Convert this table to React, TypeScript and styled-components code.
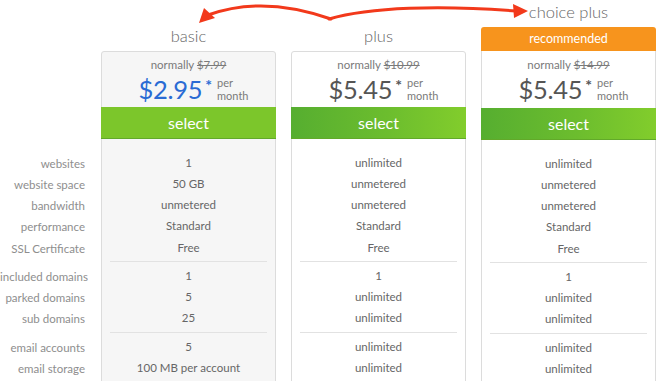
import React from "react";
import styled, { createGlobalStyle, css } from "styled-components";

const Global = createGlobalStyle`
  html, body {
    margin: 0;
    padding: 0;
    background: #ffffff;
    overflow: hidden;
  }
  body {
    font-family: Lato, "Open Sans", "Liberation Sans", sans-serif;
    color: #555;
  }
`;

type Plan = {
  name: string;
  was: string;
  price: string;
  highlight?: boolean;
  featured?: boolean;
  values: string[][];
};

const labels: string[][] = [
  ["websites", "website space", "bandwidth", "performance", "SSL Certificate"],
  ["included domains", "parked domains", "sub domains"],
  ["email accounts", "email storage"],
];

const plans: Plan[] = [
  {
    name: "basic",
    was: "$7.99",
    price: "2.95",
    highlight: true,
    values: [
      ["1", "50 GB", "unmetered", "Standard", "Free"],
      ["1", "5", "25"],
      ["5", "100 MB per account"],
    ],
  },
  {
    name: "plus",
    was: "$10.99",
    price: "5.45",
    values: [
      ["unlimited", "unmetered", "unmetered", "Standard", "Free"],
      ["1", "unlimited", "unlimited"],
      ["unlimited", "unlimited"],
    ],
  },
  {
    name: "choice plus",
    was: "$14.99",
    price: "5.45",
    featured: true,
    values: [
      ["unlimited", "unmetered", "unmetered", "Standard", "Free"],
      ["1", "unlimited", "unlimited"],
      ["unlimited", "unlimited"],
    ],
  },
];

const Page = styled.div`
  position: relative;
  width: 660px;
  height: 381px;
  overflow: hidden;
`;

const Table = styled.div`
  display: grid;
  grid-template-columns: 86px 176px 176px 176px;
  column-gap: 14px;
  & > :first-child {
    margin-right: 1px;
  }
`;

const LabelColumn = styled.div`
  padding-top: 150px;
`;

const Group = styled.div<{ $ruled?: boolean }>`
  padding: 2.5px 0 3.5px;
  margin: 0 8px;
  border-bottom: 1px solid ${(p) => (p.$ruled ? "#e2e2e2" : "transparent")};
  &:last-child {
    border-bottom-color: transparent;
  }
`;

const LabelGroup = styled(Group)`
  margin: 0;
`;

const Row = styled.div`
  height: 21.25px;
  line-height: 21.25px;
  font-size: 11.5px;
  white-space: nowrap;
  text-align: center;
`;

const LabelRow = styled(Row)`
  color: #8e8e8e;
  text-align: right;
`;

const ValueRow = styled(Row)`
  color: #666;
`;

const PlanColumn = styled.div<{ $featured?: boolean }>`
  display: flex;
  flex-direction: column;
  padding-top: ${(p) => (p.$featured ? "0" : "24px")};
  margin-left: 1px;
`;

const Heading = styled.div`
  height: 24px;
  line-height: 24px;
  margin-bottom: 3px;
  text-align: center;
  font-size: 16.5px;
  font-weight: 300;
  color: #666;
`;

const Badge = styled.div`
  height: 24px;
  line-height: 23px;
  background: #f7941d;
  border-radius: 3px 3px 0 0;
  color: #fff;
  text-align: center;
  font-size: 12.5px;
`;

const Card = styled.div<{ $shaded?: boolean; $featured?: boolean }>`
  border: 1px solid #dcdcdc;
  border-radius: 3px 3px 0 0;
  height: 400px;
  background: ${(p) => (p.$shaded ? "#f6f6f6" : "#ffffff")};
  ${(p) =>
    p.$featured &&
    css`
      border-top: none;
      border-radius: 0;
    `}
`;

const PriceBlock = styled.div<{ $featured?: boolean }>`
  height: ${(p) => (p.$featured ? "57px" : "55px")};
  display: flex;
  flex-direction: column;
  align-items: center;
  padding-top: ${(p) => (p.$featured ? "7px" : "6px")};
  box-sizing: border-box;
`;

const Normally = styled.div`
  font-size: 11.5px;
  color: #7a7a7a;
  line-height: 14px;
`;

const Struck = styled.span`
  text-decoration: line-through;
`;

const PriceLine = styled.div<{ $highlight?: boolean }>`
  display: flex;
  align-items: flex-start;
  margin-top: 1px;
  margin-left: 10px;
  color: ${(p) => (p.$highlight ? "#2a6bd4" : "#555")};
`;

const Amount = styled.span`
  font-size: 25.5px;
  font-weight: 400;
  line-height: 32px;
  letter-spacing: -0.3px;
`;

const Star = styled.span`
  font-size: 16px;
  line-height: 15px;
  font-weight: 700;
  margin: 4px 5px 0 3px;
`;

const PerMonth = styled.span`
  display: flex;
  flex-direction: column;
  font-size: 11px;
  line-height: 13px;
  color: #7a7a7a;
  margin-top: 3px;
`;

const SelectButton = styled.button<{ $flat?: boolean }>`
  display: block;
  width: calc(100% + 2px);
  margin: 0 -1px;
  height: 32px;
  border: none;
  border-bottom: 1px solid #62a92a;
  padding: 0;
  color: #fff;
  font-family: inherit;
  font-size: 16px;
  cursor: pointer;
  background: ${(p) =>
    p.$flat ? "#7cc62b" : "linear-gradient(90deg, #56ae30 0%, #6cbd2e 55%, #82cd2c 100%)"};
`;

const Body = styled.div`
  padding-top: 10px;
`;

const ArrowLayer = styled.svg`
  position: absolute;
  left: 0;
  top: 0;
  pointer-events: none;
`;

function Arrows() {
  return (
    <ArrowLayer width={660} height={30} viewBox="0 0 660 30">
      <path
        d="M331 19 C 300 8, 255 -2, 208 15"
        fill="none"
        stroke="#f2391b"
        strokeWidth={3}
        strokeLinecap="round"
      />
      <polygon points="199,23 204,8 215,18" fill="#f2391b" />
      <path
        d="M329 19 C 370 7, 440 5, 516 11"
        fill="none"
        stroke="#f2391b"
        strokeWidth={3}
        strokeLinecap="round"
      />
      <polygon points="528,11 513,4 514,18" fill="#f2391b" />
    </ArrowLayer>
  );
}

function PlanCard({ plan }: { plan: Plan }) {
  return (
    <PlanColumn $featured={plan.featured}>
      <Heading>{plan.name}</Heading>
      {plan.featured && <Badge>recommended</Badge>}
      <Card $shaded={plan.highlight} $featured={plan.featured}>
        <PriceBlock $featured={plan.featured}>
          <Normally>
            normally <Struck>{plan.was}</Struck>
          </Normally>
          <PriceLine $highlight={plan.highlight}>
            <Amount>${plan.price}</Amount>
            <Star>*</Star>
            <PerMonth>
              <span>per</span>
              <span>month</span>
            </PerMonth>
          </PriceLine>
        </PriceBlock>
        <SelectButton $flat={plan.highlight}>select</SelectButton>
        <Body>
          {plan.values.map((group, gi) => (
            <Group key={gi} $ruled>
              {group.map((v, i) => (
                <ValueRow key={i}>{v}</ValueRow>
              ))}
            </Group>
          ))}
        </Body>
      </Card>
    </PlanColumn>
  );
}

export default function App() {
  return (
    <Page>
      <Global />
      <Table>
        <LabelColumn>
          {labels.map((group, gi) => (
            <LabelGroup key={gi}>
              {group.map((l) => (
                <LabelRow key={l}>{l}</LabelRow>
              ))}
            </LabelGroup>
          ))}
        </LabelColumn>
        {plans.map((p) => (
          <PlanCard key={p.name} plan={p} />
        ))}
      </Table>
      <Arrows />
    </Page>
  );
}
